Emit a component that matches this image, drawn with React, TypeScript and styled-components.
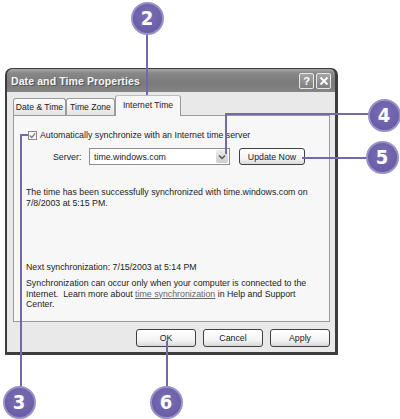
import styled, { createGlobalStyle } from 'styled-components';

const GlobalStyle = createGlobalStyle`
  body {
    margin: 0;
    background: #fff;
  }
`;

const ui = `"Liberation Sans", Arial, sans-serif`;

export default function App() {
  return (
    <Stage>
      <GlobalStyle />
      <Window>
        <TitleBar>
          <Title>Date and Time Properties</Title>
          <CaptionButtons>
            <CapButton>?</CapButton>
            <CapButton>
              <svg width="10" height="10" viewBox="0 0 10 10">
                <path d="M1.5 1.5 L8.5 8.5 M8.5 1.5 L1.5 8.5" stroke="#fff" strokeWidth="1.8" />
              </svg>
            </CapButton>
          </CaptionButtons>
        </TitleBar>
        <Body>
          <TabRow>
            <Tab $w={53}>Date &amp; Time</Tab>
            <Tab $w={49}>Time Zone</Tab>
            <Tab $w={66} $active>Internet Time</Tab>
          </TabRow>
          <Panel>
            <CheckRow>
              <CheckBox>
                <svg width="7" height="7" viewBox="0 0 7 7">
                  <path d="M0.8 3.5 L2.8 5.5 L6.2 1.3" fill="none" stroke="#777" strokeWidth="1.3" />
                </svg>
              </CheckBox>
              Automatically synchronize with an Internet time server
            </CheckRow>
            <ServerRow>
              <Label>Server:</Label>
              <Combo>
                <ComboText>time.windows.com</ComboText>
                <DropButton>
                  <svg width="8" height="6" viewBox="0 0 8 6">
                    <path d="M1 1.5 L4 4.5 L7 1.5" fill="none" stroke="#555" strokeWidth="1.5" />
                  </svg>
                </DropButton>
              </Combo>
              <PushButton $w={66} $h={17} $ml={9}>Update Now</PushButton>
            </ServerRow>
            <Para $mt={22}>
              <Line>The time has been successfully synchronized with time.windows.com on</Line>
              <Line>7/8/2003 at 5:15 PM.</Line>
            </Para>
            <Para $mt={54}>
              <Line>Next synchronization: 7/15/2003 at 5:14 PM</Line>
            </Para>
            <Para $mt={5.5}>
              <Line>Synchronization can occur only when your computer is connected to the</Line>
              <Line>
                {'Internet.  Learn more about '}
                <Link>time synchronization</Link>
                {' in Help and Support'}
              </Line>
              <Line>Center.</Line>
            </Para>
          </Panel>
          <ButtonRow>
            <PushButton $w={60} $h={18}>OK</PushButton>
            <PushButton $w={60} $h={18}>Cancel</PushButton>
            <PushButton $w={60} $h={18}>Apply</PushButton>
          </ButtonRow>
        </Body>
      </Window>

      <Leader $x={146} $y={34} $w={2} $h={73} />
      <Leader $x={225} $y={113} $w={145} $h={2} />
      <Leader $x={225} $y={113} $w={2} $h={41} />
      <Leader $x={302} $y={157} $w={66} $h={2} />
      <Leader $x={20} $y={134} $w={2} $h={253} />
      <Leader $x={20} $y={134} $w={8} $h={2} />
      <Leader $x={166} $y={341} $w={2} $h={46} />

      <Bubble $x={147} $y={18}>2</Bubble>
      <Bubble $x={384} $y={115}>4</Bubble>
      <Bubble $x={382} $y={157}>5</Bubble>
      <Bubble $x={19} $y={402}>3</Bubble>
      <Bubble $x={166} $y={402}>6</Bubble>
    </Stage>
  );
}

const Stage = styled.div`
  position: relative;
  width: 400px;
  height: 419px;
  overflow: hidden;
  box-sizing: border-box;
  padding: 68px 0 0 5px;
  font-family: ${ui};
  color: #222;
`;

const Window = styled.div`
  width: 333px;
  height: 287px;
  box-sizing: border-box;
  display: flex;
  flex-direction: column;
  border-style: solid;
  border-color: #3d3d3d;
  border-width: 1px 3px 3px 2px;
  border-radius: 7px 7px 0 0;
  background: #7c7c7c;
`;

const TitleBar = styled.div`
  height: 23px;
  display: flex;
  align-items: center;
  justify-content: space-between;
  padding: 1px 4px 0 4px;
  box-sizing: border-box;
  border-radius: 6px 6px 0 0;
  background: linear-gradient(#a8a8a8, #888 18%, #7a7a7a 60%, #858585);
`;

const Title = styled.div`
  font-size: 10.5px;
  font-weight: bold;
  color: #f5f5f5;
  text-shadow: 1px 1px 0 #555;
  letter-spacing: 0.1px;
`;

const CaptionButtons = styled.div`
  display: flex;
  gap: 2px;
`;

const CapButton = styled.div`
  width: 13px;
  height: 14px;
  display: flex;
  align-items: center;
  justify-content: center;
  border: 1px solid #e8e8e8;
  border-radius: 2px;
  background: linear-gradient(#a5a5a5, #7f7f7f);
  color: #fff;
  font-size: 11px;
  font-weight: bold;
`;

const Body = styled.div`
  flex: 1;
  display: flex;
  flex-direction: column;
  padding: 3px 5px 5px 6px;
  background: #e9e9e9;
`;

const TabRow = styled.div`
  height: 20px;
  display: flex;
  align-items: flex-end;
`;

const Tab = styled.div<{ $w: number; $active?: boolean }>`
  width: ${(p) => p.$w}px;
  height: ${(p) => (p.$active ? 21 : 17)}px;
  margin-bottom: ${(p) => (p.$active ? -1 : 0)}px;
  position: relative;
  z-index: ${(p) => (p.$active ? 1 : 0)};
  box-sizing: border-box;
  display: flex;
  align-items: center;
  justify-content: center;
  padding-bottom: ${(p) => (p.$active ? 3 : 0)}px;
  border: 1px solid #9a9a9a;
  border-bottom: none;
  border-top-color: ${(p) => (p.$active ? '#bdbdbd' : '#9a9a9a')};
  border-radius: 3px 3px 0 0;
  background: ${(p) => (p.$active ? '#f7f7f7' : 'linear-gradient(#fcfcfc, #e4e4e4)')};
  font-size: 8.6px;
  white-space: nowrap;
`;

const Panel = styled.div`
  height: 207px;
  box-sizing: border-box;
  display: flex;
  flex-direction: column;
  padding: 14px 12px 0;
  border: 1px solid #9a9a9a;
  background: #f7f7f7;
  font-size: 8.8px;
`;

const CheckRow = styled.div`
  height: 10px;
  display: flex;
  align-items: center;
  gap: 3px;
  margin-left: 2px;
  white-space: nowrap;
`;

const CheckBox = styled.div`
  width: 9px;
  height: 9px;
  box-sizing: border-box;
  display: flex;
  align-items: center;
  justify-content: center;
  border: 1px solid #8a8a8a;
  background: #fbfbfb;
`;

const ServerRow = styled.div`
  height: 17px;
  display: flex;
  align-items: center;
  margin-top: 8px;
`;

const Label = styled.div`
  width: 36px;
  margin-left: 27px;
`;

const Combo = styled.div`
  width: 141px;
  height: 17px;
  box-sizing: border-box;
  display: flex;
  align-items: stretch;
  padding: 1px;
  border: 1px solid #8c8c8c;
  background: #fff;
`;

const ComboText = styled.div`
  flex: 1;
  display: flex;
  align-items: center;
  padding-left: 3px;
`;

const DropButton = styled.div`
  width: 12px;
  display: flex;
  align-items: center;
  justify-content: center;
  border-radius: 2px;
  background: linear-gradient(#ececec, #cdcdcd);
`;

const PushButton = styled.div<{ $w: number; $h: number; $ml?: number }>`
  width: ${(p) => p.$w}px;
  height: ${(p) => p.$h}px;
  margin-left: ${(p) => p.$ml ?? 0}px;
  box-sizing: border-box;
  display: flex;
  align-items: center;
  justify-content: center;
  border: 1px solid #404040;
  border-radius: 3px;
  background: linear-gradient(#ffffff, #f3f3f3 65%, #dadada);
  font-size: 8.8px;
  color: #222;
`;

const Para = styled.div<{ $mt: number }>`
  margin-top: ${(p) => p.$mt}px;
  display: flex;
  flex-direction: column;
`;

const Line = styled.div`
  height: 10.5px;
  line-height: 10.5px;
  white-space: pre;
`;

const Link = styled.span`
  color: #666;
  text-decoration: underline;
`;

const ButtonRow = styled.div`
  display: flex;
  justify-content: flex-end;
  gap: 7px;
  margin-top: 7px;
`;

const Leader = styled.div<{ $x: number; $y: number; $w: number; $h: number }>`
  position: absolute;
  left: ${(p) => p.$x}px;
  top: ${(p) => p.$y}px;
  width: ${(p) => p.$w}px;
  height: ${(p) => p.$h}px;
  background: #7468ac;
`;

const Bubble = styled.div<{ $x: number; $y: number }>`
  position: absolute;
  left: ${(p) => p.$x - 16.5}px;
  top: ${(p) => p.$y - 16.5}px;
  width: 33px;
  height: 33px;
  box-sizing: border-box;
  display: flex;
  align-items: center;
  justify-content: center;
  border-radius: 50%;
  border: 2px solid #9890c6;
  background: radial-gradient(circle at 50% 40%, #7a6fb4, #6356a0);
  color: #fff;
  font-family: "Liberation Sans Narrow", "DejaVu Sans Condensed", sans-serif;
  font-weight: bold;
  font-size: 20px;
`;
